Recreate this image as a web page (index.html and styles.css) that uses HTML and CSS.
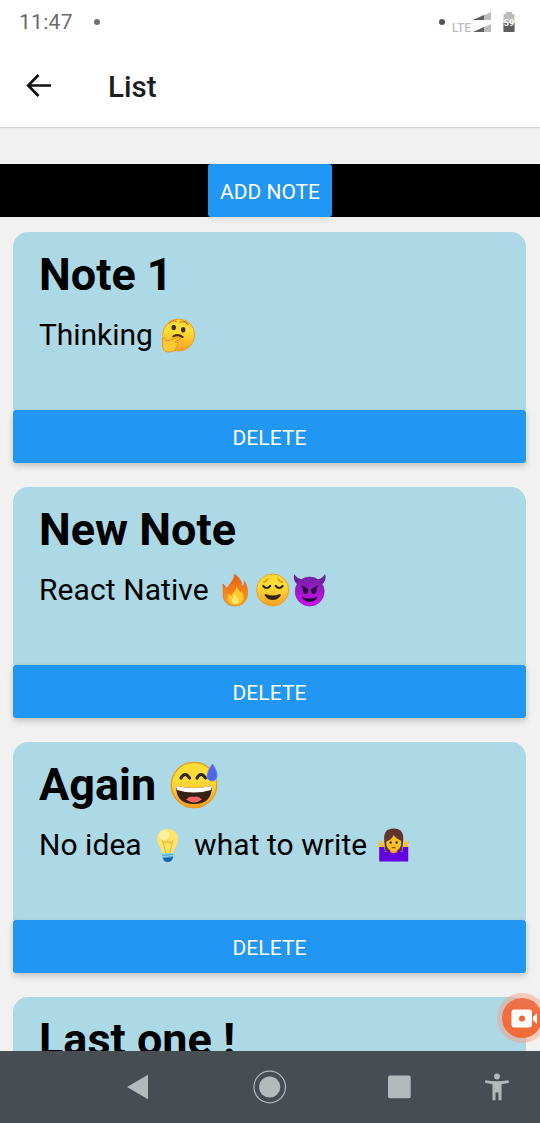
FILE: index.html
```html
<!DOCTYPE html>
<html lang="en">
<head>
<meta charset="utf-8">
<title>List</title>
<link rel="stylesheet" href="styles.css">
</head>
<body>
<div class="screen">
  <div class="status">
    <span class="time">11:47</span>
    <span class="dot"></span>
    <span class="spacer"></span>
    <span class="dot dark"></span>
    <span class="lte">LTE</span>
    <svg class="signal" width="18" height="22" viewBox="0 0 18 22"><path d="M0 9 18 1v8z" fill="#bdbdbd"/><path d="M0 9 11 4v5z" fill="#606060"/><path d="M0 21 18 13v8z" fill="#bdbdbd"/><path d="M0 21 11 16v5z" fill="#606060"/></svg>
    <svg class="battery" width="12" height="21" viewBox="0 0 12 21"><path d="M3 0h6v2h1.500q1 0 1 1v16q0 1-1 1h-9q-1 0-1-1V3q0-1 1-1H3z" fill="#bdbdbd"/><path d="M.5 11h11v8q0 1-1 1h-9q-1 0-1-1z" fill="#5c5c5c"/><text class="level" x="6" y="13.500" text-anchor="middle">59</text></svg>
  </div>
  <header class="header">
    <svg width="26" height="26" viewBox="0 0 26 26" fill="none" stroke="#111" stroke-width="2.700"><path d="M25 12.500H3M12.500 2 2.200 12.500l10.300 10.500"/></svg>
    <h1 class="heading">List</h1>
  </header>
  <main class="content">
    <div class="toolbar"><button class="btn add">ADD NOTE</button></div>
    <div class="list">
      <article class="card">
        <div class="note">
          <h2 class="title">Note 1</h2>
          <p class="text"><span class="t1">Thinking </span><svg class="emoji" viewBox="0 0 37 36"><circle cx="18.500" cy="18" r="16" fill="url(#face)" stroke="#eda01f"/><ellipse cx="13.500" cy="10.500" rx="2.200" ry="2.800" fill="#422b0d"/><ellipse cx="23" cy="12.800" rx="2.200" ry="2.800" fill="#422b0d"/><path d="M9 6q3-3.500 7-1.500M20 5q4-2 8 2.500" fill="none" stroke="#d98a16" stroke-width="1.600" stroke-linecap="round"/><path d="M13 19.500q4-3 9.500.5" fill="none" stroke="#422b0d" stroke-width="2" stroke-linecap="round"/><path d="M2.500 21q2-1 3.500 3l4-1 8.500-3q2.500 0 1.500 2l-5.500 3h2q2 1 .5 2.500 1 2-1 3-1 4-7 4.500-6.500 0-6.500-6z" fill="#ffc936" stroke="#e89018"/></svg></p>
        </div>
        <button class="btn">DELETE</button>
      </article>
      <article class="card">
        <div class="note">
          <h2 class="title">New Note</h2>
          <p class="text react"><span class="t2">React Native </span><svg class="emoji" viewBox="0 0 37 36"><path d="M18 2c6 4 8 8 7.500 13 2-1 3-4 2.500-6 4 6 4 13 2 18-2 5-6 7-11 7-8 0-12-5-12-11 0-5 0-8-.5-11 2 1 3.500 3 4 5C13 12 19 7 18 2z" fill="url(#flame)" stroke="#dd742b" stroke-width=".7"/><path d="M20 12c1 6 4 6 4 9q1-1 1-2.500c5 7 1 14-5.500 14s-10-5-7-11q1 2 2.500 2c3-4 6-6 5-11.500z" fill="#ffc830"/><path d="M19 21q-1 4-3 6c-1 3 1 5 3.500 5s4-3 3-5q-3-2-3.500-6z" fill="#ffe566"/></svg><svg class="emoji" viewBox="0 0 37 36"><circle cx="18.500" cy="18" r="16" fill="url(#face)" stroke="#eda01f"/><path d="M9 10q3 0 4.500-3.500M24 6.500q1 3.500 4.500 3.500" fill="none" stroke="#df9518" stroke-width="1.400" stroke-linecap="round"/><path d="M9 14q3.500 4 7 0M21.500 14q3.500 4 7 0" fill="none" stroke="#352516" stroke-width="2.200" stroke-linecap="round"/><path d="M11.500 22q7 3 14 0 1.500 0 1 1.500-3 4.500-8 4.500t-8-4.500q-.5-1.500 1-1.500z" fill="#352516"/></svg><svg class="emoji" viewBox="0 0 37 36"><path d="M7 13Q1 9 3 2q3 5 9 5.500 6.500-3 13 0 6-.5 9-5.500 2 7-4 11z" fill="#6a22a0"/><circle cx="18.500" cy="19.500" r="14.500" fill="url(#imp)" stroke="#7b1fa2" stroke-width=".7"/><path d="m11.500 15 5.500 3q0 4-2.500 4t-3-4zM25.500 15 20 18q0 4 2.500 4t3-4z" fill="#25093c"/><path d="m10.500 14 6.500 4M26.500 14 20 18" stroke="#350d51" stroke-width="1.800"/><path d="M12 25q6.500 3 13 0 1.500 0 1 1-3 4-7.500 4T11 26q-.5-1 1-1z" fill="#25093c"/></svg></p>
        </div>
        <button class="btn">DELETE</button>
      </article>
      <article class="card">
        <div class="note">
          <h2 class="title"><span class="t3">Again </span><svg class="emoji-lg" viewBox="0 0 56 53"><circle cx="27" cy="27" r="22.700" fill="url(#face)" stroke="#e79a1e" stroke-width="1.300"/><path d="M14 20q4-7 8.500 0M30 20q4-7 8.500 0" fill="none" stroke="#33220c" stroke-width="3.200" stroke-linecap="round"/><path d="M9 28q18 4 36 0 0 18-18 18T9 28z" fill="#342315"/><path d="M9 28q18 4 36 0l-1 4q-17 5-34 0z" fill="#fff"/><path d="M19 41.500q4-4 8-2.500 4-1.500 8 2.500-4 3-8 3t-8-3z" fill="#ff6068"/><path d="M45.500 6q5 8 4.500 12a5 5 0 0 1-10 0q.5-5.500 5.500-12z" fill="#4c66e8" stroke="#6485ee"/></svg></h2>
          <p class="text idea"><span class="t4">No idea </span><svg class="emoji" viewBox="0 0 37 36"><path d="M18.500 2c7 0 10.500 5 10.500 10 0 6-4 8-5 14H13c-1-6-5-8-5-14 0-5 3.500-10 10.500-10z" fill="#fde36c"/><ellipse cx="15" cy="8" rx="5" ry="5" fill="#fff0a0"/><path d="m16.500 26-3-12 3 2 2-2 2 2 3-2-3 12" fill="none" stroke="#e9bd38" stroke-width="1.100"/><path d="M13 26h11v5q-2 3-5.500 3T13 31z" fill="#8ed3f2"/><path d="m13 28.500 11-1M13 31l11-1.500" stroke="#4aa5d7" stroke-width="1.200"/><path d="M14 31l10-1q-1 5-5.500 5T14 31z" fill="#1765a8"/></svg><span class="t5"> what to write </span><svg class="emoji" viewBox="0 0 37 36"><path d="M18.500 1.500C10 1.500 8.500 7 9 14l1 10h17l1-10c.5-7-1-12.500-9.500-12.500z" fill="#60352c"/><path d="m2 13 4 3-1-4 3 4q2 3 0 5H4q1-4-2-8zM35 13l-4 3 1-4-3 4q-2 3 0 5h4q-1-4 2-8z" fill="#f9bf2c"/><path d="M4 20h5l1 5q4-3 8.500-3t8.500 3l1-5h5v14.500H4z" fill="#6500e5"/><path d="M7 32q4-1 4-6M30 32q-4-1-4-6" fill="none" stroke="#4a00b8"/><path d="M15 22h7v3q-3.500 2.500-7 0z" fill="#e69b1d"/><ellipse cx="18.500" cy="16" rx="7.500" ry="8.500" fill="#fcc21b"/><path d="M10 15q1-8 7-10 8 0 10 9-6-2-8.500-6-2 5-8.500 7z" fill="#60352c"/><circle cx="15.500" cy="15.500" r="1.200" fill="#3a2719"/><circle cx="21.500" cy="15.500" r="1.200" fill="#3a2719"/><path d="M16.500 21q2-1 4 0" fill="none" stroke="#753c18" stroke-width="1.200"/></svg></p>
        </div>
        <button class="btn">DELETE</button>
      </article>
      <article class="card">
        <div class="note"><h2 class="title">Last one !</h2></div>
      </article>
    </div>
    <svg class="recorder" width="50" height="50" viewBox="0 0 50 50"><circle cx="25" cy="25" r="25" fill="#f5a184" opacity=".5"/><circle cx="25" cy="25" r="20" fill="url(#rec)"/><rect x="14.500" y="16.500" width="20.500" height="18" rx="3" fill="#fff"/><path d="m36 24 4-4v11l-4-4z" fill="#fff"/><circle cx="25" cy="25.500" r="3" fill="#e9662f"/></svg>
  </main>
  <nav class="navbar">
    <svg width="540" height="72" viewBox="0 0 540 72" fill="#b4b9bb"><path d="M127 36 148 23.800v24.400z"/><circle cx="269.700" cy="36" r="15.800" fill="none" stroke="#b4b9bb" stroke-width="1.200"/><circle cx="269.700" cy="36" r="10.600"/><rect x="388" y="24.500" width="22.700" height="22.700" rx="2"/><circle cx="497" cy="25.500" r="2.900"/><path d="M485.500 29.200q11.500 2.300 23 0l.6 2.500-7.600 1.500V49.300h-3V41.500h-3v7.800h-3V33.200l-7.600-1.500z"/></svg>
  </nav>
</div>
<svg class="defs" width="0" height="0">
  <defs>
    <linearGradient id="face" x2="0" y2="1"><stop offset=".4" stop-color="#fddc35"/><stop offset="1" stop-color="#f99f26"/></linearGradient>
    <linearGradient id="flame" x2="0" y2="1"><stop stop-color="#e85b13"/><stop offset=".6" stop-color="#f8831a"/><stop offset="1" stop-color="#fda824"/></linearGradient>
    <linearGradient id="imp" x2="0" y2="1"><stop stop-color="#7222a5"/><stop offset="1" stop-color="#d50df2"/></linearGradient>
    <linearGradient id="rec" x2="0" y2="1"><stop stop-color="#ee7148"/><stop offset="1" stop-color="#f26a36"/></linearGradient>
  </defs>
</svg>
</body>
</html>
```
FILE: styles.css
```css
* { box-sizing: border-box; margin: 0; padding: 0; }
body { font-family: Roboto, sans-serif; color: #000; }
svg { display: block; flex: none; }
.defs { position: absolute; }
.screen { width: 540px; height: 1123px; display: flex; flex-direction: column; background: #f1f1f1; overflow: hidden; }
.status { height: 44px; flex: none; display: flex; align-items: center; background: #fff; padding: 0 25px 0 19px; }
.time { font-size: 21px; letter-spacing: .3px; color: #6a6a6a; margin-right: 21px; }
.dot { width: 6px; height: 6px; border-radius: 50%; background: #707070; }
.dark { background: #555; }
.spacer { flex: 1; }
.lte { font-size: 12px; font-weight: 500; color: #bdbdbd; margin: 11px 2px 0 7px; }
.signal { margin-right: 12px; }
.level { font-size: 9px; font-weight: 700; fill: #fff; }
.header { height: 83px; flex: none; display: flex; align-items: center; gap: 56px; padding: 0 26px; background: #fff; box-shadow: 0 1px 1px #d5d5d5; }
.heading { font-size: 29.500px; font-weight: 500; color: #1c1c1e; padding-top: 2px; }
.content { height: 924px; flex: none; position: relative; overflow: hidden; padding-top: 37px; }
.toolbar { height: 53px; background: #000; display: flex; justify-content: center; }
.btn { display: block; width: 100%; height: 53px; border: 0; border-radius: 3px; background: #2196f3; color: #fff; font: 400 21px Roboto, sans-serif; letter-spacing: .1px; box-shadow: 0 3px 6px rgba(0,0,0,.2); padding-top: 2px; }
.add { width: 124px; letter-spacing: 0; box-shadow: 0 3px 6px rgba(0,0,0,.08); }
.list { display: flex; flex-direction: column; gap: 24px; padding: 15px 14px 0 13px; }
.card { height: 231px; flex: none; }
.note { height: 178px; background: #add8e6; border-radius: 15px 15px 0 0; padding: 16px 26px 0; }
.title { display: flex; height: 53px; font-size: 45px; line-height: 53px; font-weight: 700; white-space: pre; }
.text { display: flex; height: 36px; margin-top: 16px; font-size: 30px; line-height: 36px; letter-spacing: -.05px; white-space: pre; }
.react { letter-spacing: .08px; }
.idea { letter-spacing: .05px; }
.emoji { width: 37.400px; height: 36px; }
.emoji-lg { width: 56px; height: 53px; }
.recorder { position: absolute; left: 497px; top: 866px; }
.navbar { height: 72px; flex: none; background: #464e53; }
```
